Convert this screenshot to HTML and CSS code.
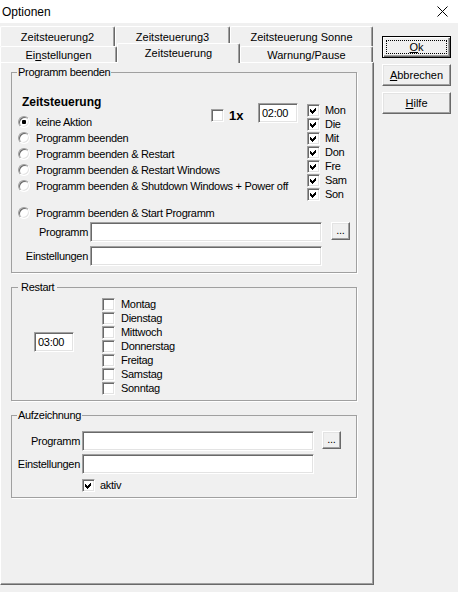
FILE: index.html
```html
<!DOCTYPE html>
<html>
<head>
  <meta charset="utf-8">
  <link rel="stylesheet" href="styles.css">
</head>
<body>
  <div class="titlebar">
    <span class="title">Optionen</span>
    <svg class="close" width="11" height="11" viewBox="0 0 11 11"><path d="M0.5 0.5L10.5 10.5M10.5 0.5L0.5 10.5" stroke="#000" stroke-width="1" fill="none"/></svg>
  </div>

  <div class="dialog">
    <div class="tabs">
      <div class="tabrow back">
        <div class="tab tab-z2">Zeitsteuerung2</div>
        <div class="tab tab-z3">Zeitsteuerung3</div>
        <div class="tab tab-sonne">Zeitsteuerung Sonne</div>
      </div>
      <div class="tabrow front">
        <div class="tab tab-einst">Ei<u>n</u>stellungen</div>
        <div class="tab tab-zeit active">Zeitsteuerung</div>
        <div class="tab tab-warn">Warnung/Pause</div>
      </div>

      <div class="panel">
        <!-- Programm beenden -->
        <fieldset class="group grp-prog">
          <legend>Programm beenden</legend>
          <div class="zeit">
            <div class="opts">
              <div class="heading">Zeitsteuerung</div>
              <div class="opt"><span class="radio on"></span>keine Aktion</div>
              <div class="opt"><span class="radio"></span>Programm beenden</div>
              <div class="opt"><span class="radio"></span>Programm beenden &amp; Restart</div>
              <div class="opt"><span class="radio"></span>Programm beenden &amp; Restart Windows</div>
              <div class="opt"><span class="radio"></span>Programm beenden &amp; Shutdown Windows + Power off</div>
              <div class="opt opt-start"><span class="radio"></span>Programm beenden &amp; Start Programm</div>
            </div>
            <div class="once"><span class="check"></span><b>1x</b></div>
            <div class="field time">02:00</div>
            <div class="days">
              <div class="cb"><span class="check"><svg width="9" height="9" viewBox="0 0 9 9"><polygon points="1,3 3,5 7,1 7,4 3,8 1,6"/></svg></span>Mon</div>
              <div class="cb"><span class="check"><svg width="9" height="9" viewBox="0 0 9 9"><polygon points="1,3 3,5 7,1 7,4 3,8 1,6"/></svg></span>Die</div>
              <div class="cb"><span class="check"><svg width="9" height="9" viewBox="0 0 9 9"><polygon points="1,3 3,5 7,1 7,4 3,8 1,6"/></svg></span>Mit</div>
              <div class="cb"><span class="check"><svg width="9" height="9" viewBox="0 0 9 9"><polygon points="1,3 3,5 7,1 7,4 3,8 1,6"/></svg></span>Don</div>
              <div class="cb"><span class="check"><svg width="9" height="9" viewBox="0 0 9 9"><polygon points="1,3 3,5 7,1 7,4 3,8 1,6"/></svg></span>Fre</div>
              <div class="cb"><span class="check"><svg width="9" height="9" viewBox="0 0 9 9"><polygon points="1,3 3,5 7,1 7,4 3,8 1,6"/></svg></span>Sam</div>
              <div class="cb"><span class="check"><svg width="9" height="9" viewBox="0 0 9 9"><polygon points="1,3 3,5 7,1 7,4 3,8 1,6"/></svg></span>Son</div>
            </div>
          </div>
          <div class="frow first">
            <span class="lbl">Programm</span>
            <div class="field"></div>
            <div class="btn dots">...</div>
          </div>
          <div class="frow">
            <span class="lbl">Einstellungen</span>
            <div class="field"></div>
          </div>
        </fieldset>

        <!-- Restart -->
        <fieldset class="group grp-restart">
          <legend>Restart</legend>
          <div class="restart">
            <div class="field time">03:00</div>
            <div class="daylist">
              <div class="cb"><span class="check"></span>Montag</div>
              <div class="cb"><span class="check"></span>Dienstag</div>
              <div class="cb"><span class="check"></span>Mittwoch</div>
              <div class="cb"><span class="check"></span>Donnerstag</div>
              <div class="cb"><span class="check"></span>Freitag</div>
              <div class="cb"><span class="check"></span>Samstag</div>
              <div class="cb"><span class="check"></span>Sonntag</div>
            </div>
          </div>
        </fieldset>

        <!-- Aufzeichnung -->
        <fieldset class="group grp-rec">
          <legend>Aufzeichnung</legend>
          <div class="frow first">
            <span class="lbl">Programm</span>
            <div class="field"></div>
            <div class="btn dots">...</div>
          </div>
          <div class="frow">
            <span class="lbl">Einstellungen</span>
            <div class="field"></div>
          </div>
          <div class="cb aktiv"><span class="check"><svg width="9" height="9" viewBox="0 0 9 9"><polygon points="1,3 3,5 7,1 7,4 3,8 1,6"/></svg></span>aktiv</div>
        </fieldset>
      </div>
    </div>

    <div class="buttons">
      <div class="btn default"><span class="focus"><u>O</u>k</span></div>
      <div class="btn"><u>A</u>bbrechen</div>
      <div class="btn"><u>H</u>ilfe</div>
    </div>
  </div>
</body>
</html>
```

FILE: styles.css
```css
* {
  box-sizing: border-box;
}

body {
  margin: 0;
  width: 458px;
  height: 592px;
  overflow: hidden;
  background: #f0f0f0;
  color: #000;
  font-family: "Liberation Sans", Arial, sans-serif;
  font-size: 11px;
}

u {
  text-decoration: underline;
  text-underline-offset: 1px;
}

/* title bar */
.titlebar {
  height: 23px;
  background: #fff;
  display: flex;
  align-items: center;
  justify-content: space-between;
  padding: 0 10px 0 2px;
}

.title {
  font-size: 12px;
}

/* layout */
.dialog {
  display: flex;
  align-items: flex-start;
}

.tabs {
  width: 374px;
  margin-top: 3px;
}

.tabrow {
  display: flex;
}

.tabrow.back {
  height: 20px;
}

.tabrow.front {
  height: 16px;
  align-items: flex-end;
}

.tab {
  height: 100%;
  display: flex;
  align-items: center;
  justify-content: center;
  white-space: nowrap;
  background: #f0f0f0;
  border-top: 1px solid #fff;
  border-left: 1px solid #fff;
  border-right: 1px solid #696969;
  box-shadow: inset -1px 0 #a0a0a0;
  border-radius: 2px 2px 0 0;
}

.tab-z2 { width: 115px; }
.tab-z3 { width: 115px; }
.tab-sonne { width: 143px; }
.tab-einst { width: 117px; }
.tab-zeit { width: 123px; }
.tab-warn { width: 133px; }

.tab.active {
  height: 20px;
  margin-bottom: -1px;
  padding-bottom: 2px;
  position: relative;
  z-index: 1;
}

.panel {
  height: 523px;
  padding: 3px 0 0 10px;
  border-top: 1px solid #fff;
  border-left: 1px solid #fff;
  border-right: 1px solid #696969;
  border-bottom: 1px solid #696969;
  box-shadow: inset -1px -1px #a0a0a0;
}

/* group boxes */
.group {
  width: 346px;
  margin: 0;
  padding: 0 0 6px 0;
  min-inline-size: 0;
  border: 1px solid #a0a0a0;
  box-shadow: 1px 1px 0 #fff;
  letter-spacing: -0.3px;
}

.group legend {
  line-height: 13px;
  padding: 0 1px;
  margin-left: 5px;
}

.grp-restart,
.grp-rec {
  margin-top: 8px;
  padding-bottom: 5px;
}

.grp-restart legend {
  padding: 0 3px;
  margin-left: 6px;
}

/* controls */
.field {
  height: 20px;
  background: #fff;
  border: 1px solid;
  border-color: #a0a0a0 #fff #fff #a0a0a0;
  box-shadow: inset 1px 1px #696969, inset -1px -1px #e3e3e3;
  padding-left: 3px;
  line-height: 18px;
}

.check {
  flex: none;
  display: inline-flex;
  align-items: center;
  justify-content: center;
  width: 13px;
  height: 13px;
  background: #fff;
  border: 1px solid;
  border-color: #a0a0a0 #fff #fff #a0a0a0;
  box-shadow: inset 1px 1px #696969, inset -1px -1px #e3e3e3;
}

.check svg {
  display: block;
  shape-rendering: crispEdges;
}

.radio {
  flex: none;
  display: inline-flex;
  align-items: center;
  justify-content: center;
  width: 12px;
  height: 12px;
  margin-right: 6px;
  border-radius: 50%;
  background: #fff;
  border: 1px solid;
  border-color: #a0a0a0 #fff #fff #a0a0a0;
  box-shadow: inset 1px 1px #696969, inset -1px -1px #e3e3e3;
}

.radio.on::after {
  content: "";
  width: 4px;
  height: 4px;
  border-radius: 1px;
  background: #000;
}

.cb {
  height: 14px;
  display: flex;
  align-items: center;
  white-space: nowrap;
}

.cb .check {
  margin-right: 5px;
}

/* Zeitsteuerung block */
.zeit {
  display: grid;
  grid-template-columns: 193px 47px 49px 1fr;
  margin: 16px 0 0 6px;
}

.zeit > * {
  grid-row: 1;
  align-self: start;
}

.opts {
  grid-column: 1 / 4;
}

.opts .heading {
  font-size: 12px;
  font-weight: bold;
  letter-spacing: 0;
  line-height: 14px;
  margin: 0 0 5px 4px;
}

.opt {
  height: 16px;
  display: flex;
  align-items: center;
  white-space: nowrap;
}

.opt-start {
  margin-top: 11px;
}

.once {
  grid-column: 2;
  margin-top: 13px;
  display: flex;
  align-items: center;
}

.once b {
  font-size: 13px;
  letter-spacing: 0;
  margin-left: 5px;
}

.zeit .time {
  grid-column: 3;
  margin-top: 8px;
}

.time {
  width: 40px;
}

.days {
  grid-column: 4;
  margin-top: 8px;
}

/* label + input rows */
.frow {
  display: flex;
  align-items: flex-start;
  margin-top: 4px;
}

.frow.first {
  margin-top: 1px;
}

.frow .lbl {
  width: 76px;
  margin-right: 2px;
  text-align: right;
  line-height: 20px;
  white-space: nowrap;
}

.frow .field {
  width: 232px;
}

.grp-rec .frow {
  margin-top: 3px;
}

.grp-rec .frow.first {
  margin-top: 9px;
}

.grp-rec .frow .lbl {
  width: 68px;
}

.grp-rec .btn.dots {
  margin-left: 8px;
}

.aktiv {
  margin: 4px 0 0 70px;
}

/* Restart block */
.restart {
  display: flex;
  align-items: flex-start;
}

.restart .time {
  margin: 38px 0 0 22px;
}

.daylist {
  margin: 3px 0 0 28px;
}

.daylist .check {
  margin-right: 6px;
}

/* buttons */
.buttons {
  display: flex;
  flex-direction: column;
  gap: 6px;
  margin: 13px 0 0 8px;
}

.btn {
  display: flex;
  align-items: center;
  justify-content: center;
  width: 69px;
  height: 22px;
  background: #f0f0f0;
  border: 1px solid;
  border-color: #fff #696969 #696969 #fff;
  box-shadow: inset -1px -1px #a0a0a0, inset 1px 1px #e3e3e3;
}

.btn.default {
  border-color: #000;
  padding: 3px;
  box-shadow: inset 1px 1px #fff, inset -1px -1px #696969, inset -2px -2px #a0a0a0;
}

.btn .focus {
  flex: 1;
  align-self: stretch;
  display: flex;
  align-items: center;
  justify-content: center;
  border: 1px dotted #000;
}

.btn.dots {
  width: 19px;
  height: 18px;
  margin-left: 9px;
  padding-bottom: 2px;
}
```
